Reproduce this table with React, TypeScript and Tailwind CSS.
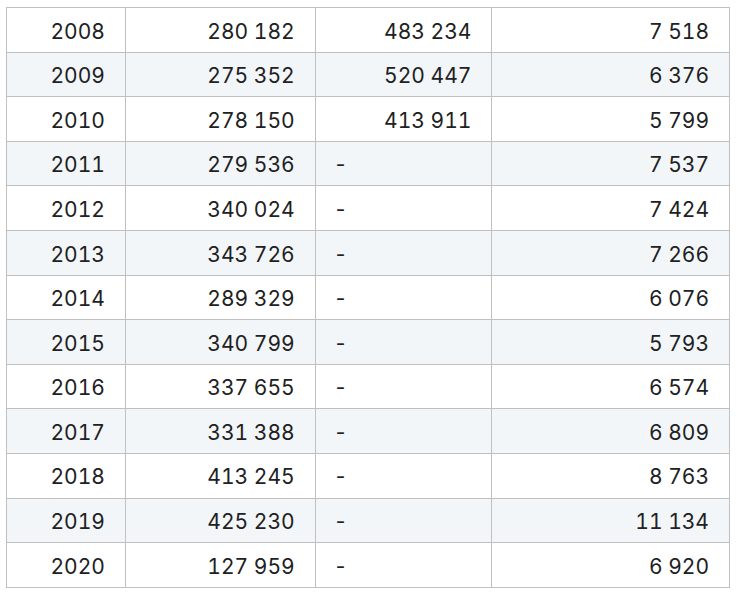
const rows: [string, string, string, string][] = [
  ['2008', '280 182', '483 234', '7 518'],
  ['2009', '275 352', '520 447', '6 376'],
  ['2010', '278 150', '413 911', '5 799'],
  ['2011', '279 536', '-', '7 537'],
  ['2012', '340 024', '-', '7 424'],
  ['2013', '343 726', '-', '7 266'],
  ['2014', '289 329', '-', '6 076'],
  ['2015', '340 799', '-', '5 793'],
  ['2016', '337 655', '-', '6 574'],
  ['2017', '331 388', '-', '6 809'],
  ['2018', '413 245', '-', '8 763'],
  ['2019', '425 230', '-', '11 134'],
  ['2020', '127 959', '-', '6 920'],
];

export default function App() {
  return (
    <div className="w-[738px] h-[595px] bg-white pt-[7px] pl-[6px]">
      <table
        className="w-[724px] border-collapse border border-[#c0c0c0] text-[#202122] text-[21px] tabular-nums"
        style={{ fontFamily: 'Inter, "Liberation Sans", sans-serif' }}
      >
        <colgroup>
          <col className="w-[119px]" />
          <col className="w-[190px]" />
          <col className="w-[177px]" />
          <col className="w-[238px]" />
        </colgroup>
        <tbody>
          {rows.map((r, i) => (
            <tr key={r[0]} className={i % 2 === 1 ? 'bg-[#f3f6f9]' : 'bg-white'}>
              <td className="h-[44.6px] p-0 px-5 pt-[3px] border border-[#c0c0c0] text-right">{r[0]}</td>
              <td className="h-[44.6px] p-0 px-5 pt-[3px] border border-[#c0c0c0] text-right">{r[1]}</td>
              <td
                className={
                  'h-[44.6px] p-0 pt-[3px] border border-[#c0c0c0] ' +
                  (r[2] === '-' ? 'pl-[18px] pr-5 text-left' : 'px-5 text-right')
                }
              >
                {r[2]}
              </td>
              <td className="h-[44.6px] p-0 px-5 pt-[3px] border border-[#c0c0c0] text-right">{r[3]}</td>
            </tr>
          ))}
        </tbody>
      </table>
    </div>
  );
}
